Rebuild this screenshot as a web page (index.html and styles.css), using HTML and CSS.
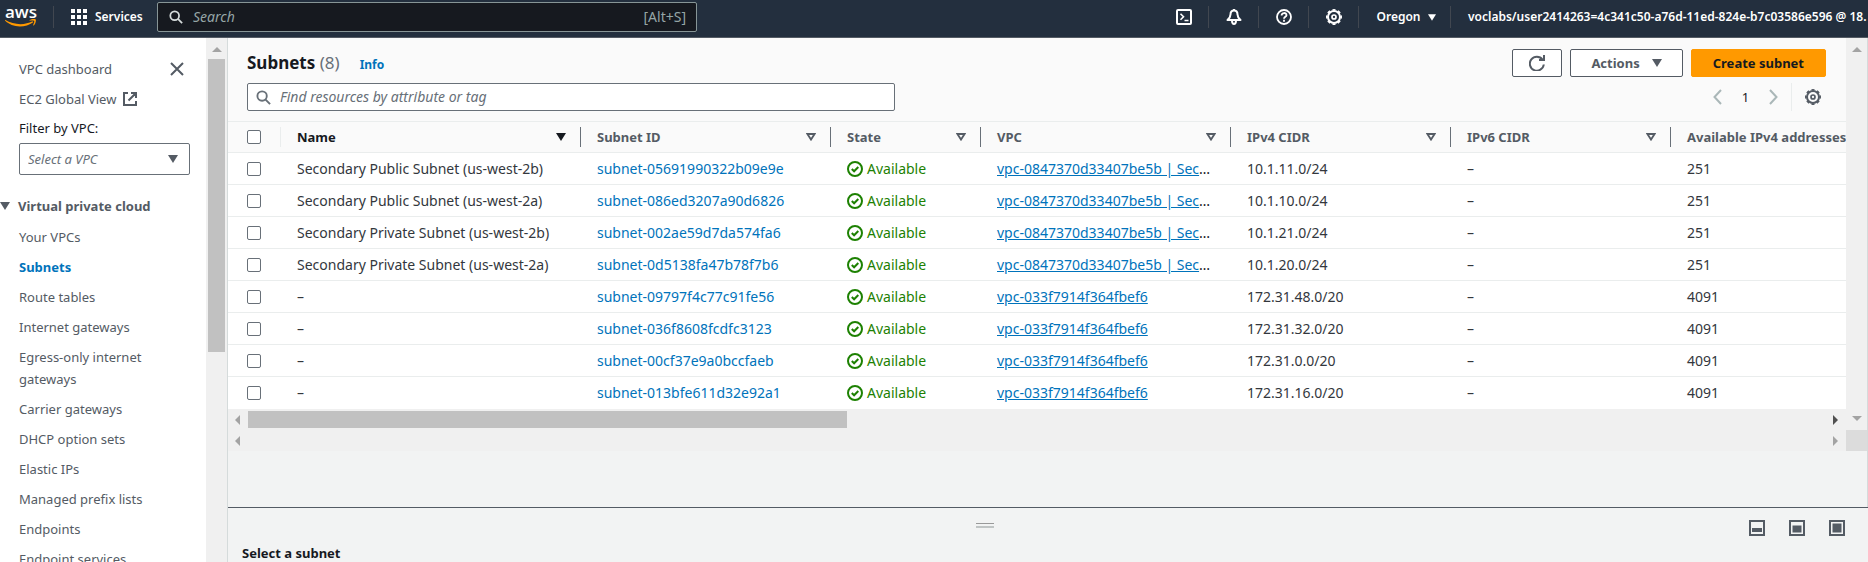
FILE: index.html
```html
<!DOCTYPE html>
<html lang="en">
<head>
<meta charset="utf-8">
<title>Subnets | VPC Console</title>
<link rel="stylesheet" href="styles.css">
</head>
<body>
<svg width="0" height="0" class="defs" aria-hidden="true">
  <symbol id="search" viewBox="0 0 16 16"><circle cx="6.500" cy="6.500" r="5" fill="none" stroke="currentColor" stroke-width="2"/><path d="M10.200 10.200 15 15" stroke="currentColor" stroke-width="2"/></symbol>
  <symbol id="gear" viewBox="0 0 16 16"><g fill="none" stroke="currentColor"><circle cx="8" cy="8" r="6" stroke-width="2"/><circle cx="8" cy="8" r="7.200" stroke-width="1.600" pathLength="16" stroke-dasharray="1.100 .9" stroke-dashoffset=".55"/><circle cx="8" cy="8" r="2" stroke-width="1.700"/></g></symbol>
  <symbol id="ok" viewBox="0 0 16 16"><circle cx="8" cy="8" r="7" fill="none" stroke="currentColor" stroke-width="2"/><path d="m4.800 8 2.300 2.300 4.200-4.300" fill="none" stroke="currentColor" stroke-width="2"/></symbol>
  <symbol id="caret" viewBox="0 0 10 8"><path d="M0 0h10L5 8z" fill="currentColor"/></symbol>
  <symbol id="sort" viewBox="0 0 10 8"><path d="M1.400 1h7.200L5 6.600z" fill="none" stroke="currentColor" stroke-width="1.800"/></symbol>
</svg>

<header class="topbar">
  <a class="logo" href="#" aria-label="AWS home">
    <span class="logo-word">aws</span>
    <svg class="logo-smile" viewBox="0 0 32 8"><path d="M0 .8C9 6.300 20 6.300 27.500 2.300l.8 1C20 9.300 7 9 0 1.600z" fill="#f90"/><path d="M24.500 1.200c2-1.400 5-1.400 6.300-.7.500 1.600-.6 4.600-2 6l-.8-.2c.7-1.500 1.500-3.500 1.200-4.300-.8-.6-3-.4-4.600-.2z" fill="#f90"/></svg>
  </a>
  <span class="rule"></span>
  <button class="services" type="button">
    <svg width="16" height="16" viewBox="0 0 16 16" fill="currentColor"><path d="M0 0h4v4H0zM6 0h4v4H6zM12 0h4v4h-4zM0 6h4v4H0zM6 6h4v4H6zM12 6h4v4h-4zM0 12h4v4H0zM6 12h4v4H6zM12 12h4v4h-4z"/></svg>
    Services
  </button>
  <label class="top-search">
    <svg width="14" height="14"><use href="#search"/></svg>
    <input type="search" placeholder="Search" aria-label="Search">
    <span>[Alt+S]</span>
  </label>
  <nav class="tools" aria-label="Account tools">
    <button type="button" aria-label="CloudShell"><svg width="16" height="16" viewBox="0 0 16 16" fill="none" stroke="currentColor" stroke-width="2"><rect x="1" y="1" width="14" height="14" rx="1"/><path d="m4.500 4.800 3 3-3 3M8.500 11.500h4" stroke-width="1.600"/></svg></button>
    <button type="button" aria-label="Notifications"><svg width="16" height="16" viewBox="0 0 16 16" fill="none" stroke="currentColor" stroke-width="2" stroke-linejoin="round"><path d="M8 1.500c-2.500 0-3.500 1.800-3.500 4 0 2.500-.8 3.500-3 5.500h13c-2.200-2-3-3-3-5.500 0-2.200-1-4-3.500-4z"/><path d="M6 11.500c0 4.600 4 4.600 4 0M8 0v2"/></svg></button>
    <button type="button" aria-label="Help"><svg width="16" height="16" viewBox="0 0 16 16" fill="none" stroke="currentColor" stroke-width="1.800"><circle cx="8" cy="8" r="7"/><path d="M5.600 6.500C5.600 3.200 10.600 3.300 10.500 6.200 10.500 7.800 8 7.800 8 9.700M8 10.800v2"/></svg></button>
    <button type="button" aria-label="Settings"><svg width="16" height="16"><use href="#gear"/></svg></button>
    <button type="button" class="region">Oregon <svg width="8" height="7" preserveAspectRatio="none"><use href="#caret"/></svg></button>
    <button type="button" class="account">voclabs/user2414263=4c341c50-a76d-11ed-824e-b7c03586e596 @ 18.</button>
  </nav>
</header>

<div class="shell">
  <aside class="sidebar">
    <div class="side-body">
      <div class="side-top"><a href="#">VPC dashboard</a>
        <button type="button" aria-label="Close navigation"><svg width="14" height="14" viewBox="0 0 14 14"><path d="m1 1 12 12M13 1 1 13" stroke="currentColor" stroke-width="2"/></svg></button></div>
      <a class="external" href="#">EC2 Global View <svg width="14" height="14" viewBox="0 0 14 14" fill="none" stroke="currentColor" stroke-width="2"><path d="M5 1H1v12h12V9M8 1h5v5M13 1 5.500 8.500"/></svg></a>
      <label class="filter-label" for="vpc">Filter by VPC:</label>
      <div class="select"><select id="vpc"><option>Select a VPC</option></select><svg width="10" height="8"><use href="#caret"/></svg></div>
      <button class="group" type="button"><svg width="10" height="8"><use href="#caret"/></svg>Virtual private cloud</button>
      <ul>
        <li><a href="#">Your VPCs</a></li>
        <li><a class="current" href="#" aria-current="page">Subnets</a></li>
        <li><a href="#">Route tables</a></li>
        <li><a href="#">Internet gateways</a></li>
        <li><a href="#">Egress-only internet gateways</a></li>
        <li><a href="#">Carrier gateways</a></li>
        <li><a href="#">DHCP option sets</a></li>
        <li><a href="#">Elastic IPs</a></li>
        <li><a href="#">Managed prefix lists</a></li>
        <li><a href="#">Endpoints</a></li>
        <li><a href="#">Endpoint services</a></li>
      </ul>
    </div>
    <div class="vbar"><i class="arrow up"></i><i class="thumb"></i></div>
  </aside>

  <main class="main">
    <div class="upper">
      <section class="list">
        <div class="list-row">
          <div class="content">
            <div class="list-head">
              <div class="title-row">
                <h1>Subnets <span>(8)</span></h1><a class="info" href="#">Info</a>
                <div class="actions">
                  <button type="button" class="btn refresh" aria-label="Refresh"><svg width="16" height="16" viewBox="0 0 16 16" fill="none" stroke="currentColor" stroke-width="2"><path d="M14.800 9.500A7 7 0 1 1 13.500 4.500M10 5h5V0"/></svg></button>
                  <button type="button" class="btn">Actions <svg width="10" height="8"><use href="#caret"/></svg></button>
                  <button type="button" class="btn primary">Create subnet</button>
                </div>
              </div>
              <div class="tool-row">
                <label class="find"><svg width="15" height="15"><use href="#search"/></svg><input type="search" placeholder="Find resources by attribute or tag" aria-label="Find resources"></label>
                <div class="pager">
                  <button type="button" aria-label="Previous page"><svg width="9" height="16" viewBox="0 0 9 16"><path d="M8 1 1.500 8 8 15" fill="none" stroke="currentColor" stroke-width="2"/></svg></button>
                  <span>1</span>
                  <button type="button" aria-label="Next page"><svg width="9" height="16" viewBox="0 0 9 16"><path d="m1 1 6.500 7L1 15" fill="none" stroke="currentColor" stroke-width="2"/></svg></button>
                  <button type="button" class="prefs" aria-label="Preferences"><svg width="16" height="16"><use href="#gear"/></svg></button>
                </div>
              </div>
            </div>
            <div class="table-wrap">
              <table>
                <colgroup><col class="c-check"><col class="c-name"><col class="c-id"><col class="c-state"><col class="c-id"><col class="c-cidr"><col class="c-cidr"><col class="c-count"></colgroup>
                <thead><tr>
                  <th class="first"><div><input type="checkbox" aria-label="Select all"></div></th>
                  <th class="sorted"><div>Name <svg width="10" height="8"><use href="#caret"/></svg></div></th>
                  <th><div>Subnet ID <svg width="10" height="8"><use href="#sort"/></svg></div></th>
                  <th><div>State <svg width="10" height="8"><use href="#sort"/></svg></div></th>
                  <th><div>VPC <svg width="10" height="8"><use href="#sort"/></svg></div></th>
                  <th><div>IPv4 CIDR <svg width="10" height="8"><use href="#sort"/></svg></div></th>
                  <th><div>IPv6 CIDR <svg width="10" height="8"><use href="#sort"/></svg></div></th>
                  <th><div>Available IPv4 addresses</div></th>
                </tr></thead>
                <tbody>
                  <tr><td><input type="checkbox" aria-label="Select row 1"></td><td>Secondary Public Subnet (us-west-2b)</td><td><a href="#">subnet-05691990322b09e9e</a></td><td><span class="ok"><svg width="16" height="16"><use href="#ok"/></svg>Available</span></td><td><a class="u" href="#">vpc-0847370d33407be5b | Sec</a>…</td><td>10.1.11.0/24</td><td>–</td><td>251</td></tr>
                  <tr><td><input type="checkbox" aria-label="Select row 2"></td><td>Secondary Public Subnet (us-west-2a)</td><td><a href="#">subnet-086ed3207a90d6826</a></td><td><span class="ok"><svg width="16" height="16"><use href="#ok"/></svg>Available</span></td><td><a class="u" href="#">vpc-0847370d33407be5b | Sec</a>…</td><td>10.1.10.0/24</td><td>–</td><td>251</td></tr>
                  <tr><td><input type="checkbox" aria-label="Select row 3"></td><td>Secondary Private Subnet (us-west-2b)</td><td><a href="#">subnet-002ae59d7da574fa6</a></td><td><span class="ok"><svg width="16" height="16"><use href="#ok"/></svg>Available</span></td><td><a class="u" href="#">vpc-0847370d33407be5b | Sec</a>…</td><td>10.1.21.0/24</td><td>–</td><td>251</td></tr>
                  <tr><td><input type="checkbox" aria-label="Select row 4"></td><td>Secondary Private Subnet (us-west-2a)</td><td><a href="#">subnet-0d5138fa47b78f7b6</a></td><td><span class="ok"><svg width="16" height="16"><use href="#ok"/></svg>Available</span></td><td><a class="u" href="#">vpc-0847370d33407be5b | Sec</a>…</td><td>10.1.20.0/24</td><td>–</td><td>251</td></tr>
                  <tr><td><input type="checkbox" aria-label="Select row 5"></td><td>–</td><td><a href="#">subnet-09797f4c77c91fe56</a></td><td><span class="ok"><svg width="16" height="16"><use href="#ok"/></svg>Available</span></td><td><a class="u" href="#">vpc-033f7914f364fbef6</a></td><td>172.31.48.0/20</td><td>–</td><td>4091</td></tr>
                  <tr><td><input type="checkbox" aria-label="Select row 6"></td><td>–</td><td><a href="#">subnet-036f8608fcdfc3123</a></td><td><span class="ok"><svg width="16" height="16"><use href="#ok"/></svg>Available</span></td><td><a class="u" href="#">vpc-033f7914f364fbef6</a></td><td>172.31.32.0/20</td><td>–</td><td>4091</td></tr>
                  <tr><td><input type="checkbox" aria-label="Select row 7"></td><td>–</td><td><a href="#">subnet-00cf37e9a0bccfaeb</a></td><td><span class="ok"><svg width="16" height="16"><use href="#ok"/></svg>Available</span></td><td><a class="u" href="#">vpc-033f7914f364fbef6</a></td><td>172.31.0.0/20</td><td>–</td><td>4091</td></tr>
                  <tr><td><input type="checkbox" aria-label="Select row 8"></td><td>–</td><td><a href="#">subnet-013bfe611d32e92a1</a></td><td><span class="ok"><svg width="16" height="16"><use href="#ok"/></svg>Available</span></td><td><a class="u" href="#">vpc-033f7914f364fbef6</a></td><td>172.31.16.0/20</td><td>–</td><td>4091</td></tr>
                </tbody>
              </table>
            </div>
            <div class="hbar"><i class="arrow left"></i><div class="track"><i class="thumb"></i></div><i class="arrow right dark"></i></div>
          </div>
          <div class="vbar"><i class="arrow up"></i><i class="arrow down"></i></div>
        </div>
        <div class="list-foot"><div class="hbar"><i class="arrow left"></i><div class="track"></div><i class="arrow right"></i></div><i class="corner"></i></div>
      </section>
    </div>
    <section class="split">
      <div class="split-bar">
        <div class="handle"><i class="grip"></i></div>
        <div class="sizes">
          <button type="button" aria-label="Small panel"><svg width="16" height="16" viewBox="0 0 16 16"><rect x="1" y="1" width="14" height="14" fill="none" stroke="currentColor" stroke-width="2"/><path d="M3 8h10v4H3z" fill="currentColor"/></svg></button>
          <button type="button" aria-label="Half panel"><svg width="16" height="16" viewBox="0 0 16 16"><rect x="1" y="1" width="14" height="14" fill="none" stroke="currentColor" stroke-width="2"/><path d="M3.500 5.500h9v7h-9z" fill="currentColor"/></svg></button>
          <button type="button" aria-label="Full panel"><svg width="16" height="16" viewBox="0 0 16 16"><rect x="1" y="1" width="14" height="14" fill="none" stroke="currentColor" stroke-width="2"/><path d="M3.500 3.500h9v9h-9z" fill="currentColor"/></svg></button>
        </div>
      </div>
      <h2>Select a subnet</h2>
    </section>
  </main>
</div>
</body>
</html>
```

FILE: styles.css
```css
* { box-sizing: border-box; }
body {
  margin: 0;
  height: 100vh;
  overflow: hidden;
  display: flex;
  flex-direction: column;
  font: 13px/22px "Noto Sans", "Open Sans", sans-serif;
  color: #16191f;
  background: #f2f3f3;
}
.defs { position: absolute; }
button, input, select { font: inherit; color: inherit; }
button { padding: 0; border: 0; background: none; }
a { color: #0073bb; text-decoration: none; }
h1, h2, ul { margin: 0; padding: 0; }
svg { flex: none; display: block; }
input[type="search"] { appearance: none; flex: 1; min-width: 0; padding: 0; border: 0; background: none; outline: 0; }
input::placeholder { font-style: italic; color: #687078; opacity: 1; }

/* top bar */
.topbar {
  flex: none;
  display: flex;
  align-items: center;
  height: 38px;
  padding: 0 0 3px 5px;
  color: #fff;
  background: #232f3e;
  border-bottom: 1px solid #545b64;
}
.logo { width: 32px; color: #fff; }
.logo-word { display: block; height: 12px; font: 600 17px/10px "Open Sans", sans-serif; }
.logo-smile { width: 32px; height: 8px; }
.rule { width: 1px; height: 22px; margin: 0 17px 0 16px; background: #414750; }
.services { display: flex; align-items: center; gap: 8px; width: 86px; font-size: 12px; font-weight: 600; white-space: nowrap; }
.top-search {
  display: flex;
  align-items: center;
  gap: 10px;
  width: 540px;
  height: 30px;
  padding: 0 10px 0 11px;
  font-size: 14px;
  background: #16191f;
  border: 1px solid #879596;
  border-radius: 2px;
}
.top-search span, .top-search input::placeholder { color: #95a5a6; }
.top-search svg { color: #d5dbdb; }
.tools { display: flex; align-items: center; margin-left: auto; min-width: 0; }
.tools button { display: flex; align-items: center; justify-content: center; gap: 7px; width: 50px; height: 22px; border-right: 1px solid #414750; font-size: 12px; font-weight: 600; }
.tools .region { width: 92px; padding-left: 3px; }
.tools .account { width: 417px; padding-left: 17px; justify-content: flex-start; border: 0; white-space: nowrap; overflow: hidden; }

.shell { flex: 1; min-height: 0; display: flex; }

/* scroll bars */
.vbar { flex: none; width: 21px; padding: 9px 2px 9px; display: flex; flex-direction: column; align-items: center; background: #f0f0f0; }
.hbar { display: flex; align-items: center; height: 21px; padding: 0 8px 0 7px; background: #f0f0f0; }
.arrow { width: 0; height: 0; border: 5px solid transparent; }
.up { border-bottom-color: #a3a3a3; border-top: 0; }
.down { border-top-color: #a3a3a3; border-bottom: 0; margin-top: auto; }
.left { border-right-color: #a3a3a3; border-left: 0; }
.right { border-left-color: #a3a3a3; border-right: 0; }
.right.dark { border-left-color: #505050; }
.thumb { display: block; background: #c1c1c1; }
.track { flex: 1; margin: 0 8px; }

/* sidebar */
.sidebar { flex: none; display: flex; width: 228px; color: #545b64; background: #fff; border-right: 1px solid #d5dbdb; }
.sidebar .thumb { width: 17px; height: 293px; margin-top: 7px; }
.side-body { flex: 1; min-width: 0; padding: 20px 16px 0 19px; overflow: hidden; }
.side-body a { color: #545b64; }
.side-body .current { color: #0073bb; font-weight: 700; }
.side-top { display: flex; justify-content: space-between; align-items: center; padding-right: 6px; }
.external { display: flex; align-items: center; gap: 7px; margin-top: 8px; }
.filter-label { display: block; margin: 7px 0 4px; color: #16191f; }
.select { display: grid; align-items: center; }
.select select { grid-area: 1 / 1; appearance: none; height: 32px; padding: 0 8px; color: #687078; font-style: italic; background: #fff; border: 1px solid #687078; border-radius: 2px; }
.select svg { grid-area: 1 / 1; justify-self: end; margin-right: 12px; pointer-events: none; }
.group { display: flex; align-items: center; gap: 8px; margin: 20px 0 9px -19px; font-weight: 700; line-height: 22px; }
.side-body ul { list-style: none; }
.side-body li { margin-bottom: 8px; }

/* subnet list */
.main { flex: 1; min-width: 0; display: flex; flex-direction: column; }
.upper { flex: 1; min-height: 0; border-right: 1px solid #d5dbdb; overflow: hidden; }
.list-row { display: flex; }
.content { flex: 1; min-width: 0; background: #fff; }
.list-head { padding: 11px 20px 10px 19px; background: #fafafa; border-bottom: 1px solid #eaeded; }
.title-row, .tool-row, .actions, .pager { display: flex; align-items: center; }
h1 { font-size: 17px; line-height: 26px; font-weight: 700; }
h1 span { font-weight: 400; color: #687078; }
.info { margin: 4px 0 0 20px; font-size: 12px; font-weight: 700; line-height: 18px; }
.actions { gap: 8px; margin-left: auto; }
.btn { display: flex; align-items: center; justify-content: center; gap: 12px; height: 28px; padding: 0 20px; font-weight: 700; color: #545b64; background: #fff; border: 1px solid #545b64; border-radius: 2px; }
.refresh { width: 50px; padding: 0; }
.primary { padding: 0 21px; color: #16191f; background: #f90; border-color: #f90; }
.tool-row { margin-top: 6px; justify-content: space-between; }
.find { display: flex; align-items: center; gap: 9px; flex: 0 1 648px; height: 28px; padding: 0 8px; font-size: 14px; color: #687078; background: #fff; border: 1px solid #687078; border-radius: 2px; }
.pager { color: #aab7b8; padding-right: 5px; }
.pager span { width: 47px; text-align: center; color: #16191f; }
.pager .prefs { display: flex; align-items: center; height: 28px; margin-left: 13px; padding-left: 13px; color: #545b64; border-left: 1px solid #eaeded; }

.table-wrap { overflow: hidden; }
table { width: 1860px; table-layout: fixed; border-collapse: separate; border-spacing: 0; }
.c-check { width: 53px; }
.c-name { width: 300px; }
.c-id { width: 250px; }
.c-state { width: 150px; }
.c-cidr { width: 220px; }
th, td { padding: 0 0 0 16px; text-align: left; white-space: nowrap; overflow: hidden; }
th { height: 31px; color: #545b64; background: #fafafa; border-bottom: 1px solid #eaeded; }
th div { display: flex; align-items: center; justify-content: space-between; height: 20px; padding-right: 14px; border-right: 1px solid #687078; }
th.first div { border-color: #eaeded; }
th.sorted { color: #16191f; }
td { height: 32px; font-size: 14px; border-bottom: 1px solid #eaeded; }
td:nth-child(2), td:nth-child(n+6) { color: #33373d; }
tr > :first-child { padding-left: 19px; }
tbody tr:last-child td { border-bottom-color: #fff; }
td .u { text-decoration: underline; }
input[type="checkbox"] { appearance: none; display: block; width: 14px; height: 14px; margin: 0; background: #fff; border: 1px solid #687078; border-radius: 2px; }
.ok { display: flex; align-items: center; gap: 4px; color: #1d8102; }
.content .track { margin-left: 8px; }
.content .thumb { width: 38%; height: 17px; }
.list-foot { display: flex; }
.list-foot .hbar { flex: 1; }
.corner { width: 21px; background: #dcdcdc; }

/* split panel */
.split { flex: none; height: 55px; border-top: 1px solid #545b64; padding: 12px 23px 0 14px; overflow: hidden; }
.split-bar { display: flex; gap: 21px; }
.handle { flex: 1; display: flex; justify-content: center; padding-top: 3px; }
.grip { width: 18px; height: 5px; border-top: 1px solid #999; border-bottom: 2px solid #c0c4c4; }
.sizes { display: flex; gap: 24px; color: #545b64; }
h2 { margin-top: 6px; font-size: 13px; line-height: 22px; }
```
